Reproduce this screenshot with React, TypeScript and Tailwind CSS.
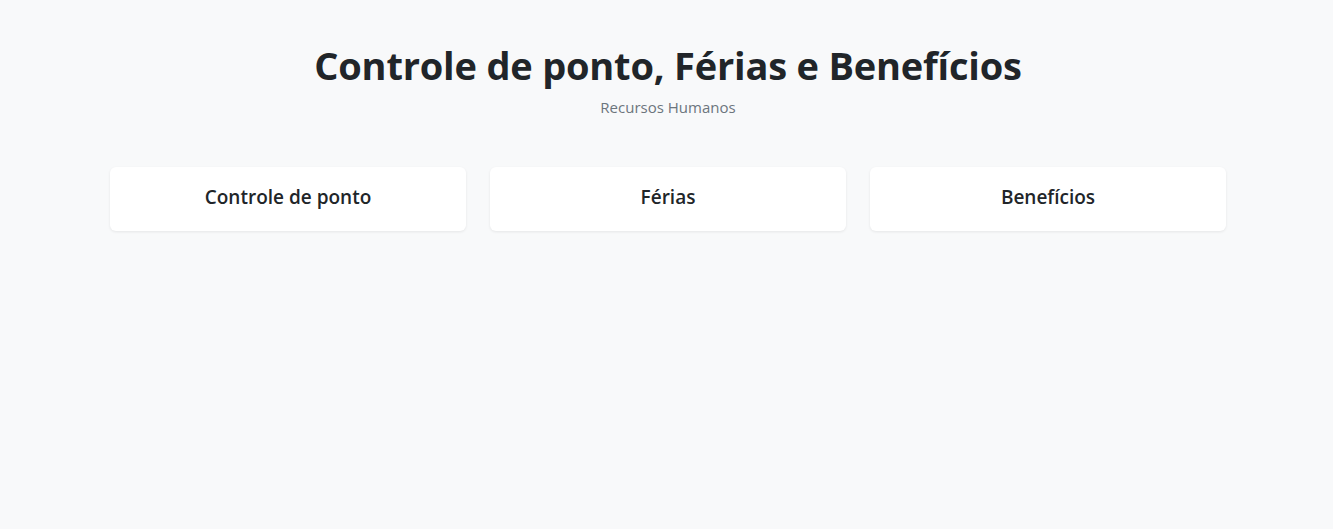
const cards = ["Controle de ponto", "Férias", "Benefícios"];

export default function App() {
  return (
    <div className="min-h-[529px] bg-[#f8f9fa] text-[#212529] font-['Open_Sans',sans-serif]">
      <div className="ml-[110px] w-[1116px] pt-[41px]">
        <h1 className="text-center text-[38px] font-bold leading-[48px] tracking-[-0.2px]">
          Controle de ponto, Férias e Benefícios
        </h1>
        <p className="mt-[6px] text-center text-[15px] leading-6 text-[#6c757d]">Recursos Humanos</p>
        <div className="mt-[48px] grid grid-cols-3 gap-6">
          {cards.map((c) => (
            <div
              key={c}
              className="flex h-16 items-center justify-center rounded-md bg-white pb-[5px] shadow-[0_1px_3px_rgba(0,0,0,0.08)]"
            >
              <h5 className="text-[19px] font-semibold leading-6">{c}</h5>
            </div>
          ))}
        </div>
      </div>
    </div>
  );
}
